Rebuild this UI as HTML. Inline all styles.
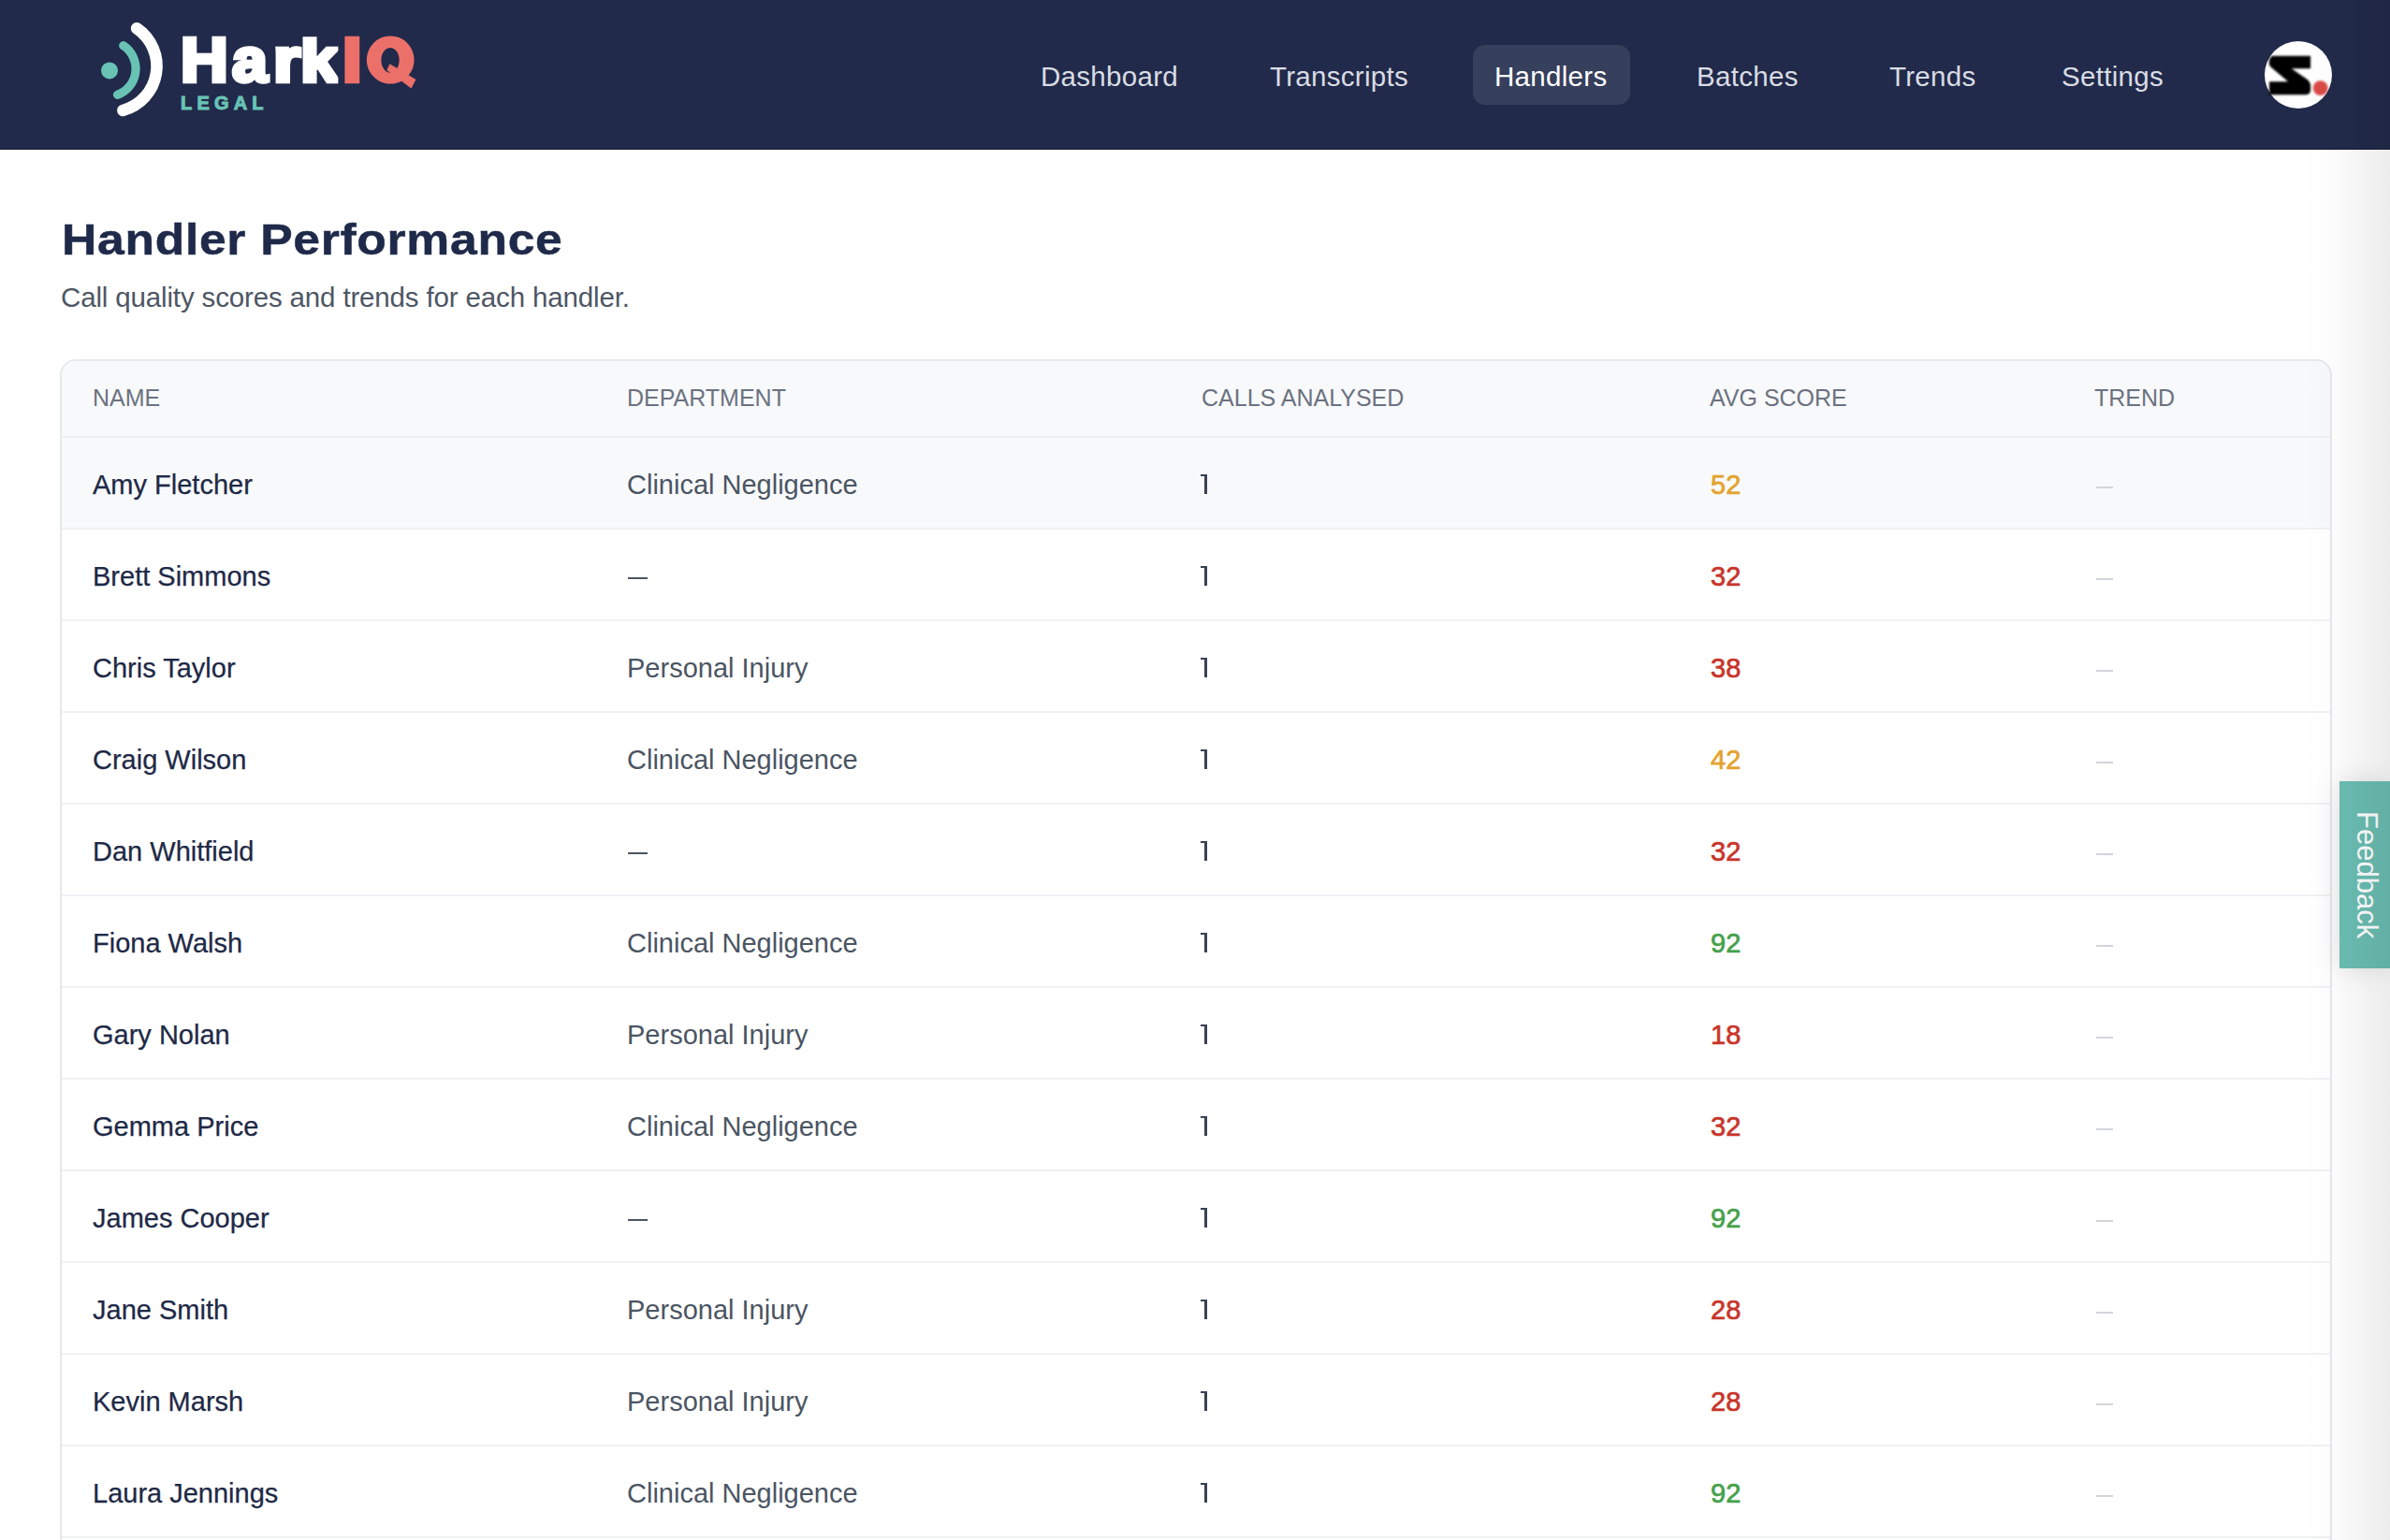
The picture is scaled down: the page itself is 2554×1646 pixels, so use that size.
<!DOCTYPE html>
<html><head><meta charset="utf-8">
<style>
html,body{margin:0;padding:0;}
body{width:2554px;height:1646px;overflow:hidden;position:relative;background:#fff;font-family:"Liberation Sans",sans-serif;}
.abs{position:absolute;white-space:nowrap;line-height:1;}
.lg{position:absolute;top:31.2px;font-size:66px;font-weight:700;line-height:1;transform-origin:0 0;}
#hdr{position:absolute;left:0;top:0;width:2554px;height:160px;background:#212a4a;}
#hdr:after{content:"";position:absolute;left:0;right:0;bottom:0;height:1px;background:#141a33;}
.nav{color:#d9dce4;font-size:29.5px;letter-spacing:0.3px;top:67px;}
#pill{position:absolute;left:1574px;top:48px;width:168px;height:64px;border-radius:13px;background:#363f5c;}
#title{left:66px;top:231.5px;font-size:47px;font-weight:700;color:#1f2a4a;letter-spacing:0.6px;-webkit-text-stroke:0.5px #1f2a4a;transform-origin:0 0;transform:scaleX(1.10);}
#sub{left:65px;top:303px;font-size:29.5px;letter-spacing:-0.15px;color:#4e5664;}
#tbl{position:absolute;left:64px;top:384px;width:2428px;height:1400px;border:2px solid #e6e8ec;border-radius:17px;box-sizing:border-box;overflow:hidden;background:#fff;}
#thead{position:absolute;left:0;top:0;right:0;height:82px;background:#f8f9fb;border-bottom:2px solid #eef0f3;box-sizing:border-box;}
.row{position:absolute;left:0;right:0;height:98px;border-bottom:2px solid #f0f1f4;box-sizing:border-box;}
.th{font-size:25px;color:#6b7280;top:27px;}
.td{font-size:29px;top:36px;}
.nm{color:#1e2946;-webkit-text-stroke:0.25px #1e2946;}
.dp{color:#4b5563;}
.one{position:absolute;left:1221.3px;top:39px;width:2.5px;height:20.8px;background:#3a4153;}
.one:before{content:"";position:absolute;right:0;top:0;width:6.4px;height:2.2px;background:#3a4153;}
.or{color:#e4a32f;-webkit-text-stroke:0.7px currentColor;}
.rd{color:#c8352b;-webkit-text-stroke:0.7px currentColor;}
.gr{color:#46a14c;-webkit-text-stroke:0.7px currentColor;}
.dash{position:absolute;height:2px;background:#4b5563;}
.tdash{position:absolute;left:2174px;width:18px;height:2px;background:#d1d5db;}
#fb{position:absolute;left:2500px;top:835px;width:54px;height:200px;background:#6abdb2;box-shadow:0 0 28px rgba(0,0,0,0.13);}
#shade{position:absolute;left:2462px;top:0px;width:92px;height:1646px;background:linear-gradient(to right,rgba(0,0,0,0) 0%,rgba(0,0,0,0.012) 33%,rgba(0,0,0,0.035) 60%,rgba(0,0,0,0.075) 100%);pointer-events:none;}
</style></head>
<body>
<div id="hdr">
  <svg width="460" height="160" style="position:absolute;left:0;top:0" viewBox="0 0 460 160">
    <circle cx="117" cy="75.4" r="9" fill="#68c3b5"/>
    <path d="M131.7,48.7 A29.6,29.6 0 0 1 125.5,101.3" fill="none" stroke="#68c3b5" stroke-width="9.2" stroke-linecap="round"/>
    <path d="M146.1,30.2 A49,49 0 0 1 131.4,118" fill="none" stroke="#fff" stroke-width="12.6" stroke-linecap="round"/>
  </svg>
  <span class="lg" style="left:193.1px;transform:scaleX(1.064);color:#fff;-webkit-text-stroke:4.5px #fff">H</span><span class="lg" style="left:247.7px;transform:scaleX(1.03);color:#fff;-webkit-text-stroke:4.5px #fff">a</span><span class="lg" style="left:291.7px;transform:scaleX(1.132);color:#fff;-webkit-text-stroke:4.5px #fff">r</span><span class="lg" style="clip-path:inset(8px 0 0 0);left:320.6px;transform:scaleX(1.1);color:#fff;-webkit-text-stroke:4.5px #fff">k</span><span class="lg" style="left:366.3px;transform:scaleX(1.129);color:#ec6f6a;-webkit-text-stroke:4.5px #ec6f6a">I</span><svg width="70" height="70" viewBox="385 30 70 70" style="position:absolute;left:385px;top:30px"><path fill="#ec706a" fill-rule="evenodd" d="M417.2,38.4 A25.35,25.6 0 1 1 417.19,38.4 Z M417,50.9 A9.65,13.4 0 1 0 417.01,50.9 Z"/><polygon fill="#ec706a" points="416.4,68.2 444.4,85 439.5,94.5 413.4,75"/></svg>
  <div class="abs" id="legal" style="left:193px;top:100px;font-size:20px;font-weight:700;color:#68c3b5;letter-spacing:5.2px;-webkit-text-stroke:1px #68c3b5;">LEGAL</div>
  <div id="pill"></div>
  <div class="abs nav" style="left:1112px">Dashboard</div>
  <div class="abs nav" style="left:1357px">Transcripts</div>
  <div class="abs nav" style="left:1597px;color:#fff">Handlers</div>
  <div class="abs nav" style="left:1813px">Batches</div>
  <div class="abs nav" style="left:2019px">Trends</div>
  <div class="abs nav" style="left:2203px">Settings</div>
  <svg width="72" height="72" style="position:absolute;left:2420px;top:44px" viewBox="0 0 72 72">
    <circle cx="36" cy="36" r="36" fill="#fff"/>
    <path d="M9.4,15.7 L49.1,15.7 L49.1,29.2 L28.7,29.2 L45,40.5 Q49.1,43.5 49.1,48 L49.1,52 Q49.1,57.2 44,57.2 L5,57.2 L5,43.2 L25.2,43.2 L7,28 Q4.5,26 4.8,21.5 Q5.5,15.7 9.4,15.7 Z" fill="#000" filter="url(#bl)"/>
    <defs><filter id="bl" x="-10%" y="-10%" width="120%" height="120%"><feGaussianBlur stdDeviation="0.8"/></filter></defs><circle cx="59.7" cy="50.2" r="7.9" fill="#d94b44" filter="url(#bl)"/>
  </svg>
</div>

<div class="abs" id="title">Handler Performance</div>
<div class="abs" id="sub">Call quality scores and trends for each handler.</div>

<div id="tbl">
  <div id="thead">
    <div class="abs th" style="left:33px">NAME</div>
    <div class="abs th" style="left:604px">DEPARTMENT</div>
    <div class="abs th" style="left:1218px">CALLS ANALYSED</div>
    <div class="abs th" style="left:1761px">AVG SCORE</div>
    <div class="abs th" style="left:2172px">TREND</div>
  </div>
  <div id="rows">
<div class="row" style="top:82px;background:#f8f9fb;"><div class="abs td nm" style="left:33px">Amy Fletcher</div><div class="abs td dp" style="left:604px">Clinical Negligence</div><div class="one"></div><div class="abs td or" style="left:1762px">52</div><div class="tdash" style="top:52px"></div></div>
<div class="row" style="top:180px;"><div class="abs td nm" style="left:33px">Brett Simmons</div><div class="dash" style="left:605px;top:51px;width:21px"></div><div class="one"></div><div class="abs td rd" style="left:1762px">32</div><div class="tdash" style="top:52px"></div></div>
<div class="row" style="top:278px;"><div class="abs td nm" style="left:33px">Chris Taylor</div><div class="abs td dp" style="left:604px">Personal Injury</div><div class="one"></div><div class="abs td rd" style="left:1762px">38</div><div class="tdash" style="top:52px"></div></div>
<div class="row" style="top:376px;"><div class="abs td nm" style="left:33px">Craig Wilson</div><div class="abs td dp" style="left:604px">Clinical Negligence</div><div class="one"></div><div class="abs td or" style="left:1762px">42</div><div class="tdash" style="top:52px"></div></div>
<div class="row" style="top:474px;"><div class="abs td nm" style="left:33px">Dan Whitfield</div><div class="dash" style="left:605px;top:51px;width:21px"></div><div class="one"></div><div class="abs td rd" style="left:1762px">32</div><div class="tdash" style="top:52px"></div></div>
<div class="row" style="top:572px;"><div class="abs td nm" style="left:33px">Fiona Walsh</div><div class="abs td dp" style="left:604px">Clinical Negligence</div><div class="one"></div><div class="abs td gr" style="left:1762px">92</div><div class="tdash" style="top:52px"></div></div>
<div class="row" style="top:670px;"><div class="abs td nm" style="left:33px">Gary Nolan</div><div class="abs td dp" style="left:604px">Personal Injury</div><div class="one"></div><div class="abs td rd" style="left:1762px">18</div><div class="tdash" style="top:52px"></div></div>
<div class="row" style="top:768px;"><div class="abs td nm" style="left:33px">Gemma Price</div><div class="abs td dp" style="left:604px">Clinical Negligence</div><div class="one"></div><div class="abs td rd" style="left:1762px">32</div><div class="tdash" style="top:52px"></div></div>
<div class="row" style="top:866px;"><div class="abs td nm" style="left:33px">James Cooper</div><div class="dash" style="left:605px;top:51px;width:21px"></div><div class="one"></div><div class="abs td gr" style="left:1762px">92</div><div class="tdash" style="top:52px"></div></div>
<div class="row" style="top:964px;"><div class="abs td nm" style="left:33px">Jane Smith</div><div class="abs td dp" style="left:604px">Personal Injury</div><div class="one"></div><div class="abs td rd" style="left:1762px">28</div><div class="tdash" style="top:52px"></div></div>
<div class="row" style="top:1062px;"><div class="abs td nm" style="left:33px">Kevin Marsh</div><div class="abs td dp" style="left:604px">Personal Injury</div><div class="one"></div><div class="abs td rd" style="left:1762px">28</div><div class="tdash" style="top:52px"></div></div>
<div class="row" style="top:1160px;"><div class="abs td nm" style="left:33px">Laura Jennings</div><div class="abs td dp" style="left:604px">Clinical Negligence</div><div class="one"></div><div class="abs td gr" style="left:1762px">92</div><div class="tdash" style="top:52px"></div></div>
</div>
</div>
<div id="fb"><div class="abs" style="left:7px;top:32px;font-size:31px;color:#fff;transform-origin:0 0;transform:translate(38px,0) rotate(90deg);">Feedback</div></div>
<div id="shade"></div>
</body></html>
